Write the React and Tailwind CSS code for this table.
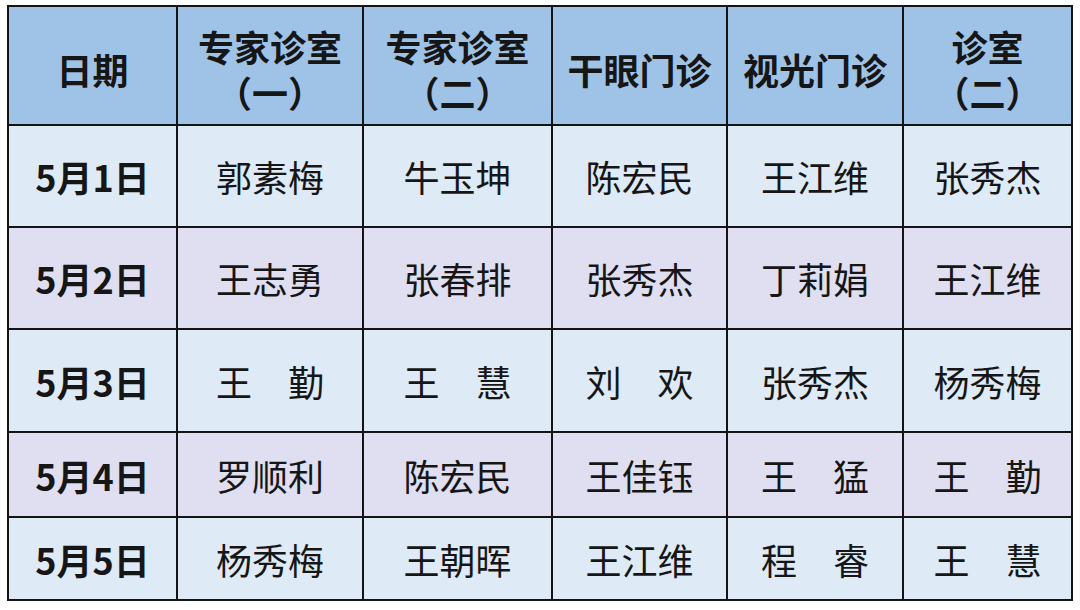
import React from 'react';

const headers = [
  ['日期'],
  ['专家诊室', '（一）'],
  ['专家诊室', '（二）'],
  ['干眼门诊'],
  ['视光门诊'],
  ['诊室', '（二）'],
];

const rows = [
  ['5月1日', '郭素梅', '牛玉坤', '陈宏民', '王江维', '张秀杰'],
  ['5月2日', '王志勇', '张春排', '张秀杰', '丁莉娟', '王江维'],
  ['5月3日', '王\u3000勤', '王\u3000慧', '刘\u3000欢', '张秀杰', '杨秀梅'],
  ['5月4日', '罗顺利', '陈宏民', '王佳钰', '王\u3000猛', '王\u3000勤'],
  ['5月5日', '杨秀梅', '王朝晖', '王江维', '程\u3000睿', '王\u3000慧'],
];

export default function App() {
  return (
    <div
      className="w-[1080px] h-[610px] bg-white pt-[5px] pl-[7px] text-[#161616]"
      style={{ fontFamily: '"Noto Sans CJK SC", "Noto Sans", sans-serif' }}
    >
      <div className="grid w-[1066px] grid-cols-[167px_184px_187px_173px_174px_167px] grid-rows-[117px_100px_100px_101px_83px_81px] gap-[2px] bg-[#141414] p-[2px]">
        {headers.map((h, i) => (
          <div
            key={i}
            className="flex flex-col items-center justify-center bg-[#9fc3e7] text-[36px] font-bold leading-[46px] pt-[6px]"
          >
            {h.map((line, j) => (
              <span key={j}>{line}</span>
            ))}
          </div>
        ))}
        {rows.map((r, ri) =>
          r.map((cell, ci) => (
            <div
              key={ri + '-' + ci}
              className={`flex items-center justify-center text-[36px] leading-none ${
                ri % 2 === 0 ? 'bg-[#deeaf6]' : 'bg-[#dfdff1]'
              } ${ci === 0 ? 'font-bold' : ''}`}
            >
              {cell}
            </div>
          ))
        )}
      </div>
    </div>
  );
}
